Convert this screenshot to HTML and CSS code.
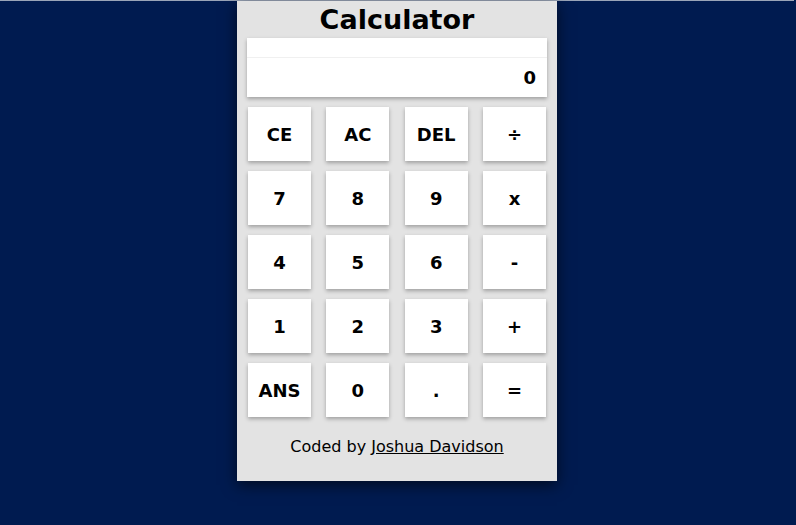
FILE: index.html
```html
<!DOCTYPE html>
<html>
<head>
<meta charset="utf-8">
<link rel="stylesheet" href="styles.css">
</head>
<body>
<div class="topline"></div>
<main class="calc">
  <h1 class="title">Calculator</h1>
  <div class="display">
    <div class="prev"></div>
    <div class="current">0</div>
  </div>
  <div class="keys">
    <button class="key">CE</button>
    <button class="key">AC</button>
    <button class="key">DEL</button>
    <button class="key">÷</button>
    <button class="key">7</button>
    <button class="key">8</button>
    <button class="key">9</button>
    <button class="key">x</button>
    <button class="key">4</button>
    <button class="key">5</button>
    <button class="key">6</button>
    <button class="key">-</button>
    <button class="key">1</button>
    <button class="key">2</button>
    <button class="key">3</button>
    <button class="key">+</button>
    <button class="key">ANS</button>
    <button class="key">0</button>
    <button class="key">.</button>
    <button class="key">=</button>
  </div>
  <p class="credit">Coded by <a href="#">Joshua Davidson</a></p>
</main>
</body>
</html>
```
FILE: styles.css
```css
html, body {
  margin: 0;
  padding: 0;
}
body {
  background: #001b50;
  height: 525px;
  overflow: hidden;
  padding-right: 2px;
  font-family: "DejaVu Sans", sans-serif;
  color: #000;
}
.topline {
  height: 1px;
  background: #9aa5b8;
}
.calc {
  margin: 0 auto;
  padding: 0 10px;
  height: 480px;
  box-sizing: border-box;
  width: 320px;
  background: #e3e3e3;
  box-shadow: 0 4px 14px rgba(0, 0, 0, 0.6);
  display: flex;
  flex-direction: column;
}
.title {
  margin: 0;
  height: 37px;
  font-size: 27px;
  font-weight: 700;
  line-height: 37px;
  text-align: center;
  color: #000;
}
.display {
  background: #fff;
  height: 59px;
  box-shadow: 0 2px 4px rgba(0, 0, 0, 0.3);
  display: flex;
  flex-direction: column;
}
.prev {
  height: 19px;
  border-bottom: 1px solid #f0f0f0;
}
.current {
  flex: 1;
  text-align: right;
  padding-right: 11px;
  padding-top: 1px;
  font-size: 18px;
  font-weight: 700;
  line-height: 38px;
}
.keys {
  margin-top: 10px;
  padding: 0 1px;
  display: grid;
  grid-template-columns: repeat(4, 63px);
  justify-content: space-between;
  row-gap: 10px;
}
.key {
  height: 54px;
  border: none;
  background: #fff;
  box-shadow: 0 2px 4px rgba(0, 0, 0, 0.3);
  font-family: inherit;
  font-size: 18px;
  font-weight: 700;
  color: #000;
  padding: 0;
}
.credit {
  margin: 21px 0 0;
  text-align: center;
  font-size: 16px;
  line-height: 18px;
}
.credit a {
  color: #000;
  text-decoration: underline;
}
```
